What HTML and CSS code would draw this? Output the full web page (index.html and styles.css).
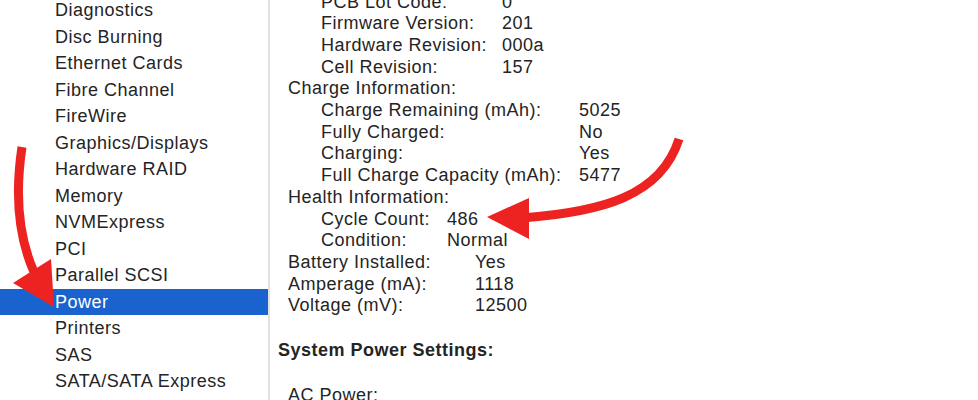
FILE: index.html
```html
<!DOCTYPE html>
<html>
<head>
<title>System Information: Power</title>
<link rel="stylesheet" href="styles.css">
</head>
<body>
<div class="window">
<ul class="sidebar">
<li>Diagnostics</li>
<li>Disc Burning</li>
<li>Ethernet Cards</li>
<li>Fibre Channel</li>
<li>FireWire</li>
<li>Graphics/Displays</li>
<li>Hardware RAID</li>
<li>Memory</li>
<li>NVMExpress</li>
<li>PCI</li>
<li>Parallel SCSI</li>
<li class="selected">Power</li>
<li>Printers</li>
<li>SAS</li>
<li>SATA/SATA Express</li>
</ul>

<div class="detail">
<div class="info">
<div class="group sub w-pcb">
<span>PCB Lot Code:</span><span>0</span>
<span>Firmware Version:</span><span>201</span>
<span>Hardware Revision:</span><span>000a</span>
<span>Cell Revision:</span><span>157</span>
</div>
<div class="line">Charge Information:</div>
<div class="group sub w-charge">
<span>Charge Remaining (mAh):</span><span>5025</span>
<span>Fully Charged:</span><span>No</span>
<span>Charging:</span><span>Yes</span>
<span>Full Charge Capacity (mAh):</span><span>5477</span>
</div>
<div class="line">Health Information:</div>
<div class="group sub w-health">
<span>Cycle Count:</span><span>486</span>
<span>Condition:</span><span>Normal</span>
</div>
<div class="group w-battery">
<span>Battery Installed:</span><span>Yes</span>
<span>Amperage (mA):</span><span>1118</span>
<span>Voltage (mV):</span><span>12500</span>
</div>
<div class="section-title">System Power Settings:</div>
<div class="line">AC Power:</div>
</div>
</div>

<svg class="arrows" width="978" height="400" viewBox="0 0 978 400">
<path class="arrow-line" d="M22,147 Q11,220 34,272"/>
<polygon class="arrow-head" points="13,283 51,259 54,307"/>
<path class="arrow-line" d="M679,139 C661,196 602,212 522,218"/>
<polygon class="arrow-head" points="487,217 529,198 529,239"/>
</svg>
</div>
</body>
</html>
```

FILE: styles.css
```css
/* System Information window, Power pane */

html, body
{ margin: 0;
padding: 0;
background: #ffffff;
overflow: hidden;
}

body
{ font-family: "Liberation Sans", Arial, sans-serif;
font-size: 18px;
letter-spacing: 0.5px;
color: #242424;
}

.window
{ position: relative;
display: flex;
width: 978px;
height: 400px;
overflow: hidden;
}

/* Sidebar */

ul.sidebar
{ list-style: none;
margin: -3px 0 0 0;
padding: 0;
width: 268px;
flex: none;
border-right: 2px solid #e2e2e2;
}

ul.sidebar li
{ height: 26.5px;
line-height: 26.5px;
padding-left: 55px;
white-space: nowrap;
}

ul.sidebar li.selected
{ background-color: #1a63cf;
color: #ffffff;
}

/* Detail pane */

div.detail
{ flex: 1;
}

div.info
{ margin-top: -8.5px;
padding-left: 18px;
line-height: 21.7px;
}

div.line
{ white-space: nowrap;
}

div.group
{ display: grid;
white-space: nowrap;
}

div.sub
{ margin-left: 33px;
}

div.w-pcb { grid-template-columns: 181px auto; }
div.w-charge { grid-template-columns: 258px auto; }
div.w-health { grid-template-columns: 126px auto; }
div.w-battery { grid-template-columns: 187px auto; }

div.section-title
{ margin: 23px 0 23px -10px;
font-weight: bold;
}

/* Annotation arrows */

svg.arrows
{ position: absolute;
left: 0;
top: 0;
pointer-events: none;
}

.arrow-line
{ fill: none;
stroke: #ec2320;
stroke-width: 9;
stroke-linecap: butt;
}

.arrow-head
{ fill: #ec2320;
}
```
